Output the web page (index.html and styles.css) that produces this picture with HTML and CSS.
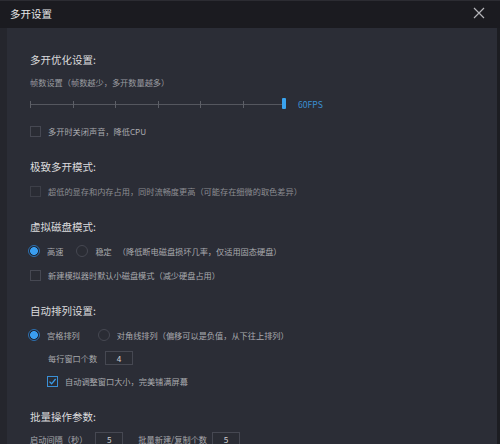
FILE: index.html
```html
<!DOCTYPE html>
<html lang="zh-CN">
<head>
<meta charset="utf-8">
<title>多开设置</title>
<link rel="stylesheet" href="styles.css">
</head>
<body>
<div class="window">
  <div class="titlebar">
    <span class="title">多开设置</span>
    <svg class="close" width="12" height="12" viewBox="0 0 12 12"><path d="M1 1L11 11M11 1L1 11" stroke="#b4b4b8" stroke-width="1.2" fill="none"/></svg>
  </div>
  <div class="body">
    <div class="section s1">
      <div class="head">多开优化设置:</div>
      <div class="sub">帧数设置（帧数越少，多开数量越多）</div>
      <div class="slider">
        <div class="track">
          <i></i><i></i><i></i><i></i><i></i><i></i><i></i>
          <span class="handle"></span>
        </div>
        <span class="fps">60FPS</span>
      </div>
      <div class="row cb-row r-after-slider"><span class="cb"></span><span class="lbl">多开时关闭声音，降低CPU</span></div>
    </div>

    <div class="section">
      <div class="head">极致多开模式:</div>
      <div class="row cb-row first"><span class="cb dim"></span><span class="lbl dimtext">超低的显存和内存占用，同时流畅度更高（可能存在细微的取色差异）</span></div>
    </div>

    <div class="section">
      <div class="head">虚拟磁盘模式:</div>
      <div class="row first">
        <span class="radio on"></span><span class="lbl">高速</span>
        <span class="radio gap13"></span><span class="lbl">稳定</span><span class="lbl note">（降低断电磁盘损坏几率，仅适用固态硬盘）</span>
      </div>
      <div class="row next"><span class="cb"></span><span class="lbl">新建模拟器时默认小磁盘模式（减少硬盘占用）</span></div>
    </div>

    <div class="section">
      <div class="head">自动排列设置:</div>
      <div class="row first">
        <span class="radio on"></span><span class="lbl">宫格排列</span>
        <span class="radio gap18"></span><span class="lbl">对角线排列（偏移可以是负值，从下往上排列）</span>
      </div>
      <div class="row next indent">
        <span class="lbl plain">每行窗口个数</span><span class="input">4</span>
      </div>
      <div class="row next indent2"><span class="cb checked"><svg width="9" height="9" viewBox="0 0 9 9"><path d="M1.5 4.6L3.6 6.8L7.6 2" stroke="#3a9be8" stroke-width="1.3" fill="none"/></svg></span><span class="lbl">自动调整窗口大小，完美铺满屏幕</span></div>
    </div>

    <div class="section">
      <div class="head">批量操作参数:</div>
      <div class="row last">
        <span class="lbl plain">启动间隔（秒）</span><span class="input w1">5</span>
        <span class="lbl plain gapl">批量新建/复制个数</span><span class="input w2">5</span>
      </div>
    </div>
  </div>
</div>
</body>
</html>
```

FILE: styles.css
```css
html, body {
  margin: 0;
  padding: 0;
  background: #2b2d36;
}
body {
  width: 500px;
  height: 444px;
  overflow: hidden;
  font-family: "Noto Sans CJK SC", "Noto Sans", sans-serif;
}
.window {
  width: 500px;
  height: 444px;
  display: flex;
  flex-direction: column;
  overflow: hidden;
}
.titlebar {
  height: 28px;
  flex: none;
  background: #1b1b20;
  border-top: 1px solid #2c2c32;
  box-sizing: border-box;
  display: flex;
  align-items: center;
  justify-content: space-between;
  padding: 0 15px 2px 10px;
}
.title {
  color: #e6e6e8;
  font-size: 10.5px;
  line-height: 14px;
}
.close {
  display: block;
  margin-top: -2px;
}
.body {
  flex: 1;
  min-height: 0;
  overflow: hidden;
  background: #2b2d36;
  border-left: 7px solid #25262d;
  border-right: 3px solid #1c1d22;
  padding: 24px 0 0 23px;
}
.section {
  margin-bottom: 21px;
}
.head {
  color: #dcdcde;
  font-size: 10.5px;
  line-height: 16px;
  height: 16px;
}
.sub {
  color: #9a9ba0;
  font-size: 8.2px;
  line-height: 14px;
  margin-top: 7px;
}
.slider {
  display: flex;
  align-items: center;
  margin-top: 9px;
  height: 12px;
}
.track {
  position: relative;
  width: 256px;
  height: 12px;
  display: flex;
  justify-content: space-between;
  align-items: center;
}
.track::before {
  content: "";
  position: absolute;
  left: 0;
  right: 0;
  top: 6px;
  height: 1px;
  background: #55575f;
}
.track i {
  display: block;
  width: 1px;
  height: 7px;
  background: #5d5f67;
  position: relative;
}
.handle {
  position: absolute;
  right: 0;
  top: 0;
  width: 4px;
  height: 11px;
  background: #3aa3ee;
  border-radius: 1px;
}
.fps {
  margin-left: 12px;
  color: #3b8fd2;
  font-size: 8.6px;
  line-height: 12px;
}
.row {
  display: flex;
  align-items: center;
  height: 14px;
}
.r-after-slider { margin-top: 14px; }
.first { margin-top: 8px; }
.section .row.first { margin-top: 9px; }
.next { margin-top: 10px; }
.indent { padding-left: 18px; height: 16px; margin-top: 8px; }
.indent2 { padding-left: 17px; margin-top: 8px; }
.last { margin-top: 6px; height: 16px; }
.cb {
  width: 11px;
  height: 11px;
  box-sizing: border-box;
  border: 1px solid #464852;
  background: #2a2c34;
  flex: none;
  display: flex;
  align-items: center;
  justify-content: center;
}
.cb.dim { border-color: #3d3f48; }
.cb.checked { border-color: #3a8fd6; }
.cb svg { display: block; }
.lbl {
  color: #a9aaae;
  font-size: 8.2px;
  line-height: 14px;
  margin-left: 7px;
  white-space: nowrap;
}
.lbl.dimtext { color: #8d8e93; }
.lbl.note { margin-left: 6px; }
.lbl.plain { margin-left: 0; }
.lbl.plain.gapl { margin-left: 15px; }
.radio {
  width: 12px;
  height: 12px;
  box-sizing: border-box;
  border-radius: 50%;
  border: 1px solid #464852;
  background: #2a2c34;
  flex: none;
  margin-left: -2px;
}
.radio.on {
  border: 1px solid #2d6fae;
  background: radial-gradient(circle, #3a9ef0 0 3.6px, #1f2633 4.2px);
}
.radio.gap13 { margin-left: 13px; }
.radio.gap18 { margin-left: 18px; }
.input {
  width: 28px;
  height: 14px;
  box-sizing: border-box;
  border: 1px solid #464852;
  background: #2a2c34;
  color: #cfd0d3;
  font-size: 8.2px;
  line-height: 12px;
  text-align: center;
  margin-left: 8px;
}
.input.w1 { margin-left: 8px; }
.input.w2 { margin-left: 5px; }
```
